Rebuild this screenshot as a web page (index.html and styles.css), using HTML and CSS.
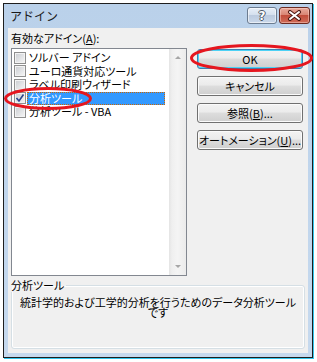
FILE: index.html
```html
<!DOCTYPE html>
<html lang="ja">
<head>
<meta charset="UTF-8">
<title>アドイン</title>
<link rel="stylesheet" href="styles.css">
</head>
<body>

<!-- ===== DIALOG ===== -->
<div class="window">
  <div class="titlebar">
    <span class="title">アドイン</span>
    <div class="caption">
      <span class="cap help">?</span>
      <span class="cap close">
        <svg width="15" height="11" viewBox="0 0 15 11">
          <path d="M3 2 L12 9 M12 2 L3 9" stroke="#4a1510" stroke-width="4" stroke-linecap="round"/>
          <path d="M3 2 L12 9 M12 2 L3 9" stroke="#fff" stroke-width="2" stroke-linecap="round"/>
        </svg>
      </span>
    </div>
  </div>

  <div class="client">
    <div class="main">
      <div class="addins">
        <div class="field-label">有効なアドイン(<u>A</u>):</div>
        <div class="listbox">
          <ul class="items">
            <li class="item"><span class="check"></span><span class="name">ソルバー アドイン</span></li>
            <li class="item"><span class="check"></span><span class="name">ユーロ通貨対応ツール</span></li>
            <li class="item"><span class="check"></span><span class="name">ラベル印刷ウィザード</span></li>
            <li class="item selected">
              <span class="check">
                <svg width="10" height="10" viewBox="0 0 10 10"><path d="M1.5 5 L4 8 L8.5 1.5" fill="none" stroke="#2c4490" stroke-width="1.6"/></svg>
              </span>
              <span class="name">分析ツール</span>
            </li>
            <li class="item"><span class="check"></span><span class="name">分析ツール - VBA</span></li>
          </ul>
          <div class="scrollbar">
            <span class="arrow"><span class="tri up"></span></span>
            <span class="arrow"><span class="tri down"></span></span>
          </div>
        </div>
      </div>

      <div class="buttons">
        <button class="btn default">OK</button>
        <button class="btn">キャンセル</button>
        <button class="btn">参照(<u>B</u>)...</button>
        <button class="btn">オートメーション(<u>U</u>)...</button>
      </div>
    </div>

    <fieldset class="group">
      <legend>分析ツール</legend>
      <p>統計学的および工学的分析を行うためのデータ分析ツール<br>です</p>
    </fieldset>
  </div>
</div>

<!-- ===== RED MARKS ===== -->
<svg class="marks" width="317" height="362" viewBox="0 0 317 362">
  <ellipse cx="251.5" cy="58" rx="60" ry="12.5" fill="none" stroke="#e5161f" stroke-width="3"/>
  <ellipse cx="48" cy="98.5" rx="42.5" ry="10" fill="none" stroke="#e5161f" stroke-width="3"/>
</svg>

</body>
</html>
```

FILE: styles.css
```css
body {
  margin: 0;
  padding: 3px;
  background: #fff;
  font-family: "Noto Sans CJK JP", sans-serif;
  font-size: 11px;
  color: #000;
}

/* ===== WINDOW ===== */
.window {
  width: 310px;
  height: 355px;
  box-sizing: border-box;
  border: 1px solid #1e1e1e;
  box-shadow: 1px 1px 0 #33c6ee;
  background: linear-gradient(#bad1ea, #c6d9ee);
  display: flex;
  flex-direction: column;
}

.titlebar {
  height: 24px;
  display: flex;
  justify-content: space-between;
  padding: 0 2px 0 6px;
}

.title {
  font-size: 12px;
  line-height: 24px;
  color: #1a1a1a;
}

.caption {
  display: flex;
  gap: 2px;
  padding-top: 3px;
}

.cap {
  height: 17px;
  box-sizing: border-box;
  border-radius: 3px;
  display: flex;
  align-items: center;
  justify-content: center;
}

.help {
  width: 30px;
  border: 1px solid #6c7c90;
  background: linear-gradient(#e8eff8, #d5e0ee 45%, #bccbdf 50%, #cad8ea);
  box-shadow: inset 0 0 0 1px rgba(255,255,255,.55);
  color: #fff;
  font-weight: bold;
  font-size: 12px;
  font-family: "DejaVu Sans", sans-serif;
  text-shadow: 1px 0 #4d5866, -1px 0 #4d5866, 0 1px #4d5866, 0 -1px #4d5866;
}

.close {
  width: 31px;
  border: 1px solid #6b2a21;
  background: linear-gradient(#e9aa9c, #d98574 45%, #c24d3b 50%, #d06c58);
  box-shadow: inset 0 0 0 1px rgba(255,220,210,.45);
}

/* ===== CLIENT ===== */
.client {
  flex: 1;
  margin: 0 4px 4px;
  padding: 4px 3px 0;
  background: #f0f0f0;
  font-feature-settings: "palt" 1;
}

.main {
  display: flex;
  align-items: flex-start;
  gap: 10px;
}

.addins {
  width: 176px;
}

.field-label {
  height: 13px;
  line-height: 13px;
}

.listbox {
  margin-top: 3px;
  height: 228px;
  box-sizing: border-box;
  border: 1px solid #828790;
  background: #fff;
  display: flex;
}

.items {
  flex: 1;
  list-style: none;
  margin: 0;
  padding: 2px 2px 0;
}

.item {
  display: flex;
  align-items: center;
  height: 13.5px;
}

.check {
  width: 12px;
  height: 12px;
  box-sizing: border-box;
  border: 1px solid #8f8f8f;
  background: linear-gradient(135deg, #c9ccd1, #f7f7f7);
  box-shadow: inset 0 0 0 1px #f3f3f3;
  display: flex;
  align-items: center;
  justify-content: center;
}

.name {
  flex: 1;
  height: 13.5px;
  box-sizing: border-box;
  margin: 0 2px 0 1px;
  padding-left: 1px;
  border: 1px solid transparent;
  line-height: 11.5px;
  white-space: nowrap;
}

.selected .name {
  background: #3399ff;
  color: #fff;
  border: 1px dotted #cc6600;
}

.scrollbar {
  width: 17px;
  display: flex;
  flex-direction: column;
  justify-content: space-between;
  background: linear-gradient(90deg, #e4e4e4, #efefef 3px, #f4f4f4 50%, #ebebeb);
}

.arrow {
  height: 17px;
  display: flex;
  align-items: center;
  justify-content: center;
}

.tri {
  width: 0;
  height: 0;
  border-left: 3px solid transparent;
  border-right: 3px solid transparent;
}

.tri.up { border-bottom: 3px solid #a6a6a6; }
.tri.down { border-top: 3px solid #a6a6a6; }

/* ===== BUTTONS ===== */
.buttons {
  width: 106px;
  margin-top: 17px;
  display: flex;
  flex-direction: column;
  gap: 7px;
}

.btn {
  height: 20px;
  padding: 0;
  border: 1px solid #707070;
  border-radius: 3px;
  background: linear-gradient(#f3f3f3, #ebebeb 45%, #dddddd 50%, #cfcfcf);
  box-shadow: inset 0 0 0 1px #fbfbfb;
  font-family: inherit;
  font-size: 11px;
  font-feature-settings: "palt" 1;
  color: #000;
}

.btn.default {
  border-color: #3c7fb1;
  box-shadow: inset 0 0 0 1px #4cd1f5;
}

/* ===== DESCRIPTION GROUP ===== */
.group {
  margin: 3px 0 0;
  padding: 0;
  border: 1px solid #d5dfe5;
  border-radius: 3px;
  box-shadow: inset 0 0 0 1px #fff;
}

.group legend {
  margin-left: -1px;
  padding: 0 2px 0 0;
  line-height: 13px;
}

.group p {
  margin: 0;
  height: 56px;
  box-sizing: border-box;
  padding-top: 5px;
  line-height: 10px;
  text-align: center;
}

/* ===== ANNOTATION ===== */
.marks {
  position: absolute;
  top: 0;
  left: 0;
  pointer-events: none;
}
```
